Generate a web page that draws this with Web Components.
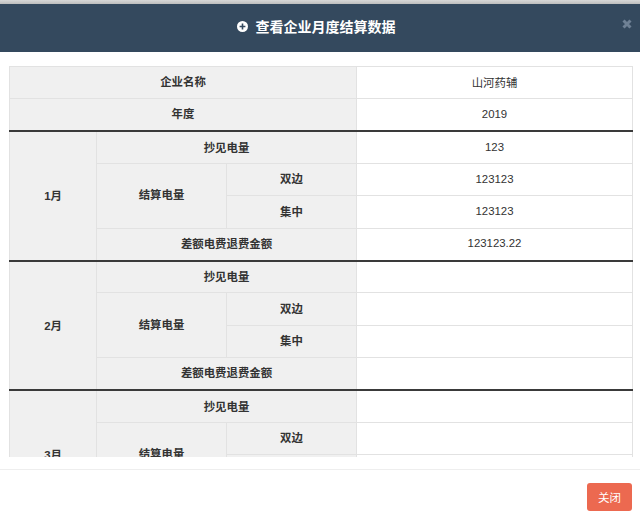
<!DOCTYPE html>
<html lang="zh">
<head>
<meta charset="utf-8">
<title>查看企业月度结算数据</title>
<style>
    html, body { margin: 0; background: #fff; }
    body { font-family: "Liberation Sans", "Noto Sans CJK SC", sans-serif; font-size: 12px; color: #333; overflow: hidden; }
</style>
</head>
<body>
<modal-dialog heading="查看企业月度结算数据">
    <settlement-table></settlement-table>
    <modal-button slot="footer">关闭</modal-button>
</modal-dialog>

<script>
class ModalDialog extends HTMLElement {
    constructor() {
        super();
        this.attachShadow({ mode: 'open' });
        this.shadowRoot.innerHTML = `
            <style>
                :host { display: flex; flex-direction: column; height: 520px; }
                .shade { height: 4px; background: linear-gradient(#d8d8d8, #bdbdbd); }
                header {
                    height: 48px;
                    box-sizing: border-box;
                    padding: 0 8px 4px 0;
                    background: #34495e;
                    color: #fff;
                    display: flex;
                    align-items: center;
                    justify-content: center;
                    gap: 8px;
                    position: relative;
                    font-size: 14px;
                    font-weight: bold;
                }
                header svg { display: block; }
                .close {
                    position: absolute;
                    right: 6px;
                    top: 13px;
                    width: 14px;
                    height: 14px;
                }
                .body { padding: 14px 7px 12px 9px; }
                .scroll { height: 391px; overflow: hidden; }
                footer {
                    border-top: 1px solid #eee;
                    padding: 13px 8px 0;
                    display: flex;
                    justify-content: flex-end;
                }
            </style>
            <div class="shade"></div>
            <header>
                <svg width="11" height="11" viewBox="0 0 11 11">
                    <circle cx="5.5" cy="5.5" r="5.5" fill="#fff"/>
                    <path d="M5.5 2.6v5.8M2.6 5.5h5.8" stroke="#34495e" stroke-width="1.6"/>
                </svg>
                <span class="title"></span>
                <svg class="close" viewBox="0 0 14 14">
                    <path d="M3.5 3.5l7 7M10.500 3.500l-7 7" stroke="#6f8195" stroke-width="3"/>
                </svg>
            </header>
            <div class="body"><div class="scroll"><slot></slot></div></div>
            <footer><slot name="footer"></slot></footer>
        `;
    }

    connectedCallback() {
        this.shadowRoot.querySelector('.title').textContent = this.getAttribute('heading');
    }
}

class ModalButton extends HTMLElement {
    constructor() {
        super();
        this.attachShadow({ mode: 'open' });
        this.shadowRoot.innerHTML = `
            <style>
                :host {
                    display: flex;
                    align-items: center;
                    justify-content: center;
                    width: 45px;
                    height: 28px;
                    background: #ec6950;
                    color: #fff;
                    border-radius: 3px;
                    font-size: 11.5px;
                }
            </style>
            <slot></slot>
        `;
    }
}

class SettlementTable extends HTMLElement {
    constructor() {
        super();
        this.attachShadow({ mode: 'open' });
        this.shadowRoot.innerHTML = `
            <style>
                :host { display: block; }
                table {
                    width: 623px;
                    table-layout: fixed;
                    border-collapse: collapse;
                    font-size: 11.4px;
                    color: #333;
                }
                th, td {
                    border: 1px solid #e2e2e2;
                    height: 32.35px;
                    padding: 0 8px 3px;
                    box-sizing: border-box;
                    text-align: center;
                    vertical-align: middle;
                }
                th { background: #f0f0f0; font-weight: bold; }
                td { background: #fff; padding-bottom: 2px; }
                tr.month > * { border-top: 2px solid #3a3a3a; padding-bottom: 1px; }
            </style>
            <table>
                <colgroup>
                    <col style="width: 87px">
                    <col style="width: 130px">
                    <col style="width: 130px">
                    <col style="width: 276px">
                </colgroup>
                <tbody></tbody>
            </table>
        `;
    }

    connectedCallback() {
        const months = [
            { name: '1月', read: '123', both: '123123', central: '123123', refund: '123123.22' },
            { name: '2月' },
            { name: '3月' },
        ];
        let rows = `
            <tr><th colspan="3">企业名称</th><td>山河药辅</td></tr>
            <tr><th colspan="3">年度</th><td>2019</td></tr>
        `;
        months.forEach(m => {
            rows += `
                <tr class="month">
                    <th rowspan="4">${m.name}</th>
                    <th colspan="2">抄见电量</th>
                    <td>${m.read || ''}</td>
                </tr>
                <tr>
                    <th rowspan="2">结算电量</th>
                    <th>双边</th>
                    <td>${m.both || ''}</td>
                </tr>
                <tr><th>集中</th><td>${m.central || ''}</td></tr>
                <tr><th colspan="2">差额电费退费金额</th><td>${m.refund || ''}</td></tr>
            `;
        });
        this.shadowRoot.querySelector('tbody').innerHTML = rows;
    }
}

customElements.define('modal-dialog', ModalDialog);
customElements.define('modal-button', ModalButton);
customElements.define('settlement-table', SettlementTable);
</script>
</body>
</html>
